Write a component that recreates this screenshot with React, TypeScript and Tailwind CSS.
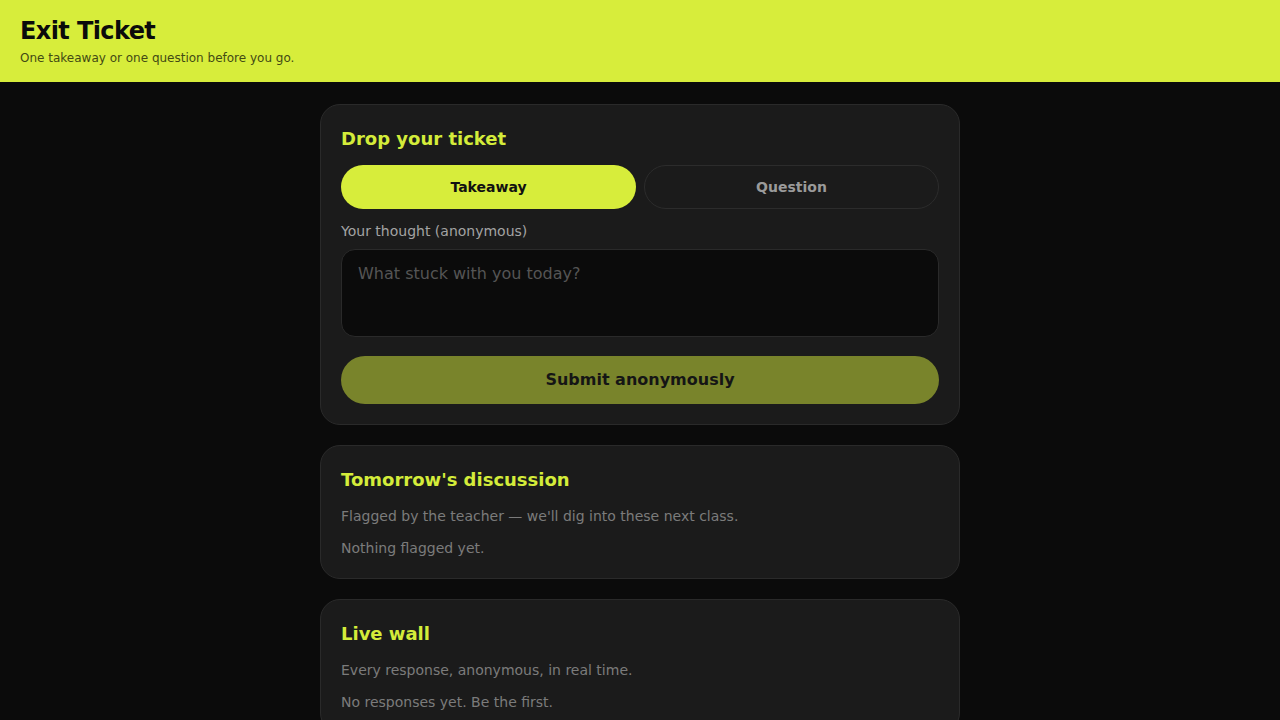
import React from "react";

export default function App() {
  const font = { fontFamily: '"DejaVu Sans", Verdana, sans-serif' };
  return (
    <div className="min-h-screen bg-[#0b0b0b]" style={font}>
      <header className="h-[82px] bg-[#d7ed3b] px-5 pt-[16px]">
        <h1 className="text-[24px] leading-[30px] font-bold tracking-tight text-[#0b0b0b]">Exit Ticket</h1>
        <p className="mt-[4px] text-xs text-[#434a14]">One takeaway or one question before you go.</p>
      </header>
      <main className="mx-auto flex w-[640px] flex-col gap-5 pt-[22px] pb-10">
        <section className="rounded-[20px] border border-[#2a2a2a] bg-[#1b1b1b] p-5">
          <h2 className="text-lg leading-7 font-bold text-[#d4ec3a]">Drop your ticket</h2>
          <div className="mt-3 grid grid-cols-2 gap-2">
            <button className="h-11 rounded-full bg-[#d7ed3b] text-sm font-bold text-[#111]">Takeaway</button>
            <button className="h-11 rounded-full border border-[#2c2c2c] bg-[#1b1b1b] text-sm font-bold text-[#9a9a9a]">Question</button>
          </div>
          <label className="mt-3 block text-sm leading-5 text-[#a3a3a3]">Your thought (anonymous)</label>
          <textarea
            className="mt-2 block h-[88px] w-full resize-none rounded-[14px] border border-[#2a2a2a] bg-[#0b0b0b] px-4 py-[12px] text-base text-[#ddd] outline-none placeholder:text-[#555]"
            placeholder="What stuck with you today?"
          />
          <button className="mt-[19px] block h-12 w-full rounded-full bg-[#d7ed3b] text-base font-bold text-[#111] opacity-50">
            Submit anonymously
          </button>
        </section>
        <section className="rounded-[20px] border border-[#2a2a2a] bg-[#1b1b1b] p-5">
          <h2 className="text-lg leading-7 font-bold text-[#d4ec3a]">Tomorrow's discussion</h2>
          <p className="mt-3 text-sm leading-5 text-[#7b7b7b]">Flagged by the teacher — we'll dig into these next class.</p>
          <p className="mt-3 text-sm leading-5 text-[#7b7b7b]">Nothing flagged yet.</p>
        </section>
        <section className="rounded-[20px] border border-[#2a2a2a] bg-[#1b1b1b] p-5">
          <h2 className="text-lg leading-7 font-bold text-[#d4ec3a]">Live wall</h2>
          <p className="mt-3 text-sm leading-5 text-[#7b7b7b]">Every response, anonymous, in real time.</p>
          <p className="mt-3 text-sm leading-5 text-[#7b7b7b]">No responses yet. Be the first.</p>
        </section>
      </main>
    </div>
  );
}
